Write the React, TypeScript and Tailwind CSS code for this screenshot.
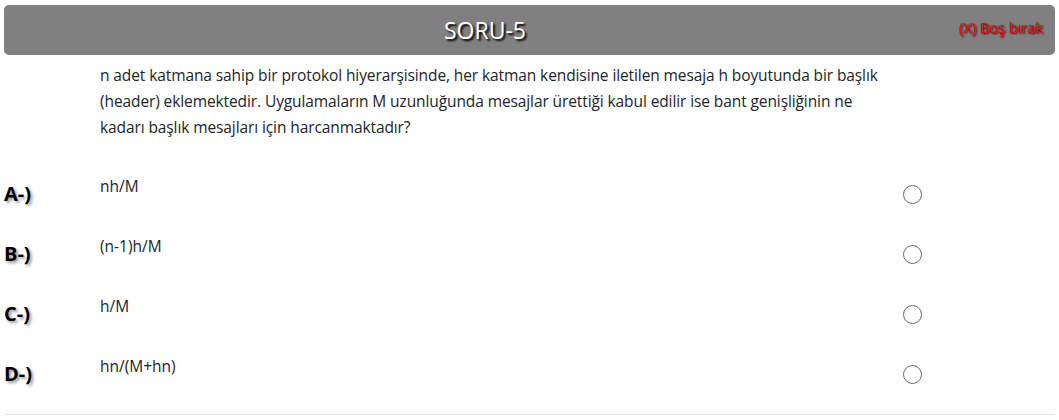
import { useState } from "react"

const options = [
    { key: "A", text: "nh/M" },
    { key: "B", text: "(n-1)h/M" },
    { key: "C", text: "h/M" },
    { key: "D", text: "hn/(M+hn)" },
]

const App = () => {
    const [selected, setSelected] = useState<string | null>(null)

    return (
        <div className="w-[1059px] h-[420px] bg-white font-['Open_Sans',sans-serif] text-[#212529] overflow-hidden">
            <div className="mx-1 mt-[5px] h-[50px] rounded-[5px] bg-[#808080] relative flex items-center">
                <span className="ml-[440px] text-white text-[23px] [text-shadow:2px_2px_2px_#000]">SORU-5</span>
                <button
                    type="button"
                    onClick={() => setSelected(null)}
                    className="absolute right-[12px] top-[11px] text-[15px] text-[#ff0000] [text-shadow:1px_1px_2px_#000] tracking-[-0.2px]"
                >
                    (X) Boş bırak
                </button>
            </div>
            <p className="ml-[100px] mt-[7px] w-[790px] text-[15.5px] leading-[26px] tracking-[-0.1px]">
                n adet katmana sahip bir protokol hiyerarşisinde, her katman kendisine iletilen mesaja h boyutunda bir başlık (header) eklemektedir. Uygulamaların M uzunluğunda mesajlar ürettiği kabul edilir ise bant genişliğinin ne kadarı başlık mesajları için harcanmaktadır?
            </p>
            <div className="mt-[34px] border-b border-[#e5e5e5] mx-1">
                {options.map(o => (
                    <div key={o.key} className="h-[60px] flex">
                        <div className="w-[96px] pt-[5px] text-[20px] font-bold text-black [text-shadow:2px_2px_3px_#999]">{o.key}-)</div>
                        <div className="flex-1 text-[15.5px] mt-[1px]">{o.text}</div>
                        <div className="w-[152px] pt-[11px]">
                            <button
                                type="button"
                                onClick={() => setSelected(o.key)}
                                className="w-[19px] h-[19px] rounded-full border-[1.5px] border-[#6b6b6b] flex items-center justify-center"
                            >
                                {selected === o.key && <span className="w-[9px] h-[9px] rounded-full bg-[#0075ff]" />}
                            </button>
                        </div>
                    </div>
                ))}
            </div>
        </div>
    )
}

export default App
